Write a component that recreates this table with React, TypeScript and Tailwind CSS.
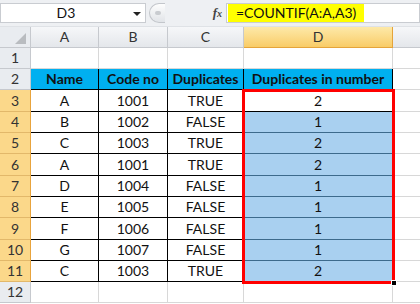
import React from 'react';

const rows = [
  ['A', '1001', 'TRUE', '2'],
  ['B', '1002', 'FALSE', '1'],
  ['C', '1003', 'TRUE', '2'],
  ['A', '1001', 'TRUE', '2'],
  ['D', '1004', 'FALSE', '1'],
  ['E', '1005', 'FALSE', '1'],
  ['F', '1006', 'FALSE', '1'],
  ['G', '1007', 'FALSE', '1'],
  ['C', '1003', 'TRUE', '2'],
];

// rows 3..11 alternate 21/22 px like the sheet
const heights = ['h-[22px]', 'h-[21px]', 'h-[21px]', 'h-[22px]', 'h-[21px]', 'h-[21px]', 'h-[22px]', 'h-[21px]', 'h-[21px]'];

const cols = 'grid grid-cols-[31px_68px_69px_76px_149px_1fr]';

function RowHead({ n, active }: { n: number; active?: boolean }) {
  return (
    <div
      className={`flex items-center justify-center border-r border-b text-[#333] ${
        active ? 'bg-[#fbd88a] border-r-[#e8a33c] border-b-[#e2b86a]' : 'bg-[#e9ecf0] border-[#c6c9ce]'
      }`}
    >
      {n}
    </div>
  );
}

function EmptyRow({ n }: { n: number }) {
  return (
    <div className={`${cols} h-[21px]`}>
      <RowHead n={n} />
      <div className="border-r border-b border-[#d8d8d8]" />
      <div className="border-r border-b border-[#d8d8d8]" />
      <div className="border-r border-b border-[#d8d8d8]" />
      <div className="border-r border-b border-[#d8d8d8]" />
      <div className="border-b border-[#d8d8d8]" />
    </div>
  );
}

export default function App() {
  return (
    <div className="w-[420px] h-[304px] overflow-hidden bg-white text-[14px] leading-[16px] text-[#111]" style={{ fontFamily: 'Lato, "Liberation Sans", sans-serif' }}>
      {/* formula bar */}
      <div className="h-[27px] bg-[#eef0f3] pt-[3px] pb-[3px] flex border-b border-[#dfe2e6]">
        <div className="w-[146px] bg-white border border-[#c9ccd1] flex items-center relative">
          <span className="flex-1 text-center pr-[14px]">D3</span>
          <span className="absolute right-[4px] top-[8px] w-0 h-0 border-l-[4px] border-r-[4px] border-t-[4px] border-l-transparent border-r-transparent border-t-[#222]" />
        </div>
        <div className="w-[80px] flex items-center">
          <div className="ml-[3px] w-[16px] h-[20px] rounded-l-full border border-r-0 border-[#c3c6cb] bg-gradient-to-b from-[#fdfdfd] to-[#e1e4e8] flex items-center justify-center">
            <span className="w-[6px] h-[4px] rounded-full bg-[#c9ccd0]" />
          </div>
          <div className="flex-1" />
          <span className="mr-[4px] italic font-bold text-[13px] text-[#444]" style={{ fontFamily: '"Liberation Serif", serif' }}>
            f<span className="text-[10px]">x</span>
          </span>
        </div>
        <div className="flex-1 bg-white border border-[#c9ccd1] flex items-center">
          <span className="ml-[1px] bg-[#ffff00] h-full flex items-center px-[8px]">=COUNTIF(A:A,A3)</span>
        </div>
      </div>

      <div className="relative">
        {/* column headers */}
        <div className={`${cols} h-[21px] text-[#333]`}>
          <div className="bg-[#e9ecf0] border-r border-b border-[#c6c9ce] relative">
            <span className="absolute right-[4px] bottom-[3px] w-0 h-0" style={{ borderBottom: '11px solid #b9bcc0', borderLeft: '11px solid transparent' }} />
          </div>
          {['A', 'B', 'C'].map((c) => (
            <div key={c} className="bg-gradient-to-b from-[#f6f7f9] to-[#e4e7eb] border-r border-b border-[#c6c9ce] flex items-center justify-center">
              {c}
            </div>
          ))}
          <div className="bg-gradient-to-b from-[#fde9a8] to-[#f9cc66] border-r border-b border-[#e5a43a] flex items-center justify-center">
            D
          </div>
          <div className="bg-gradient-to-b from-[#f6f7f9] to-[#e4e7eb] border-b border-[#c6c9ce]" />
        </div>

        <EmptyRow n={1} />

        {/* row 2 header */}
        <div className={`${cols} h-[21px]`}>
          <RowHead n={2} />
          {['Name', 'Code no', 'Duplicates', 'Duplicates in number'].map((h) => (
            <div key={h} className="bg-[#00b0f0] border-r border-b border-black flex items-center justify-center font-bold whitespace-nowrap">
              {h}
            </div>
          ))}
          <div className="border-b border-[#d8d8d8]" />
        </div>

        {rows.map((r, i) => (
          <div key={i} className={`${cols} ${heights[i]}`}>
            <RowHead n={i + 3} active />
            <div className="border-r border-b border-black flex items-center justify-center">{r[0]}</div>
            <div className="border-r border-b border-black flex items-center justify-center">{r[1]}</div>
            <div className="border-r border-b border-black flex items-center justify-center">{r[2]}</div>
            <div className={`border-r border-b border-black flex items-center justify-center ${i === 0 ? 'bg-white' : 'bg-[#a9d0f0] border-b-[#3d6a8c]'}`}>{r[3]}</div>
            <div className="border-b border-[#d8d8d8]" />
          </div>
        ))}

        <EmptyRow n={12} />

        {/* selection outline D3:D11 */}
        <div className="absolute left-[242px] top-[62px] w-[153px] h-[195px] border-[3px] border-[#ff0000] pointer-events-none" />
        <div className="absolute left-[391px] top-[253px] w-[6px] h-[6px] bg-black border border-white" />
      </div>
    </div>
  );
}
